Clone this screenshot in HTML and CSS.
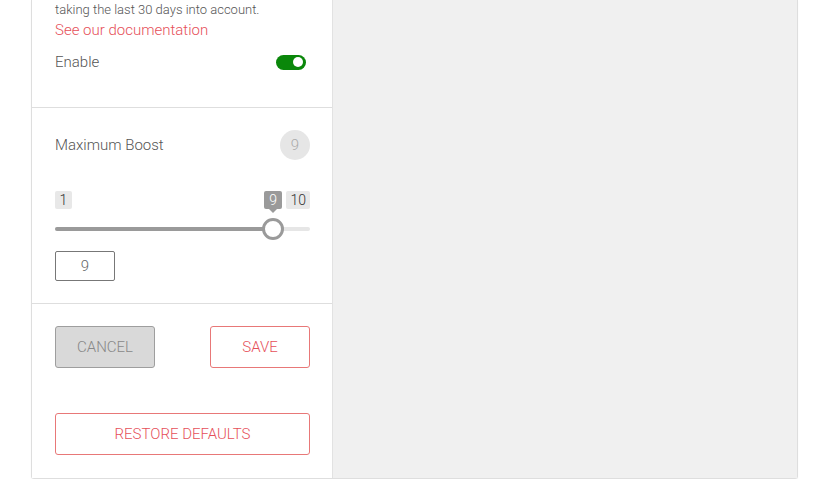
FILE: index.html
```html
<!DOCTYPE html>
<html lang="en">
<head>
  <meta charset="UTF-8" />
  <title>Boost Settings</title>
  <meta name="viewport" content="width=device-width, initial-scale=1.0" />
  <link rel="stylesheet" href="styles.css">
</head>
<body>
  <div class="card">
    <div class="settings">
      <div class="section intro">
        <p class="desc">taking the last 30 days into account.</p>
        <a class="doc-link" href="#">See our documentation</a>
        <div class="row enable-row">
          <span>Enable</span>
          <span class="toggle on"><span class="knob"></span></span>
        </div>
      </div>

      <div class="section boost">
        <div class="row">
          <span>Maximum Boost</span>
          <span class="badge">9</span>
        </div>

        <div class="slider">
          <div class="slider-labels">
            <span class="tick">1</span>
            <span class="tick">10</span>
            <span class="bubble" style="left: calc(11px + (100% - 22px) * 0.8889)">9</span>
          </div>
          <div class="track">
            <div class="fill" style="width: calc(11px + (100% - 22px) * 0.8889)"></div>
            <span class="thumb" style="left: calc(11px + (100% - 22px) * 0.8889)"></span>
          </div>
        </div>

        <input class="num" type="text" value="9" />
      </div>

      <div class="section actions">
        <div class="btn-row">
          <button class="btn cancel">Cancel</button>
          <button class="btn outline">Save</button>
        </div>
        <button class="btn outline wide">Restore Defaults</button>
      </div>
    </div>

    <div class="preview"></div>
  </div>
</body>
</html>
```

FILE: styles.css
```css
* {
  box-sizing: border-box;
}

body {
  margin: 0;
  background: #fff;
  font-family: Roboto, "Liberation Sans", sans-serif;
  font-weight: 300;
  color: #555;
}

.card {
  display: flex;
  margin-left: 31px;
  width: 767px;
  height: 479px;
  border: 1px solid #dedede;
  border-top: none;
  border-radius: 0 0 3px 3px;
  box-shadow: 0 1px 2px rgba(0, 0, 0, 0.04);
}

.settings {
  width: 301px;
  border-right: 1px solid #e2e2e2;
  background: #fff;
}

.section {
  padding: 0 22px 0 23px;
  border-bottom: 1px solid #dedede;
}

.section:last-child {
  border-bottom: none;
}

.intro {
  height: 108px;
}

.desc {
  margin: 0;
  font-size: 13px;
  line-height: 20px;
  color: #555;
}

.doc-link {
  display: block;
  font-size: 15px;
  line-height: 20px;
  color: #e6505a;
  text-decoration: none;
}

.row {
  display: flex;
  justify-content: space-between;
  align-items: center;
  font-size: 15px;
}

.enable-row {
  margin-top: 12px;
  height: 20px;
}

.toggle {
  width: 30px;
  height: 15px;
  margin-right: 4px;
  border-radius: 8px;
  background: #0a870a;
  display: flex;
  align-items: center;
  justify-content: flex-end;
  padding: 0 3px;
}

.knob {
  width: 10px;
  height: 10px;
  border-radius: 50%;
  background: #fff;
}

.boost {
  height: 196px;
  padding-top: 22px;
}

.badge {
  width: 30px;
  height: 30px;
  border-radius: 50%;
  background: #e6e6e6;
  color: #aaa;
  display: flex;
  align-items: center;
  justify-content: center;
  font-size: 15px;
}

.slider {
  margin-top: 31px;
}

.slider-labels {
  position: relative;
  display: flex;
  justify-content: space-between;
  height: 18px;
}

.tick,
.bubble {
  height: 18px;
  min-width: 17px;
  padding: 0 4px;
  border-radius: 2px;
  background: #e8e8e8;
  color: #333;
  font-size: 14px;
  line-height: 18px;
  text-align: center;
}

.bubble {
  position: absolute;
  top: 0;
  width: 18px;
  min-width: 0;
  padding: 0;
  margin-left: -9px;
  background: #9a9a9a;
  color: #fff;
}

.bubble::after {
  content: "";
  position: absolute;
  left: 5px;
  bottom: -4px;
  border-left: 4px solid transparent;
  border-right: 4px solid transparent;
  border-top: 4px solid #9a9a9a;
}

.track {
  position: relative;
  margin-top: 18px;
  height: 4px;
  border-radius: 2px;
  background: #e6e6e6;
}

.fill {
  height: 4px;
  border-radius: 2px;
  background: #9a9a9a;
}

.thumb {
  position: absolute;
  top: -9px;
  width: 22px;
  height: 22px;
  margin-left: -11px;
  border-radius: 50%;
  border: 3px solid #9a9a9a;
  background: #fff;
}

.num {
  display: block;
  margin-top: 20px;
  width: 60px;
  height: 30px;
  border: 1px solid #777;
  border-radius: 2px;
  text-align: center;
  font-family: inherit;
  font-weight: 300;
  font-size: 15px;
  color: #666;
  outline: none;
}

.actions {
  padding-top: 22px;
}

.btn-row {
  display: flex;
  justify-content: space-between;
}

.btn {
  width: 100px;
  height: 42px;
  border-radius: 3px;
  background: #fff;
  font-family: inherit;
  font-weight: 300;
  font-size: 15px;
  text-transform: uppercase;
  cursor: pointer;
}

.cancel {
  background: #d9d9d9;
  border: 1px solid #9e9e9e;
  color: #888;
}

.outline {
  border: 1px solid #e87878;
  color: #e6505a;
}

.wide {
  display: block;
  width: 100%;
  margin-top: 45px;
}

.preview {
  flex: 1;
  background: #f0f0f0;
}
```
